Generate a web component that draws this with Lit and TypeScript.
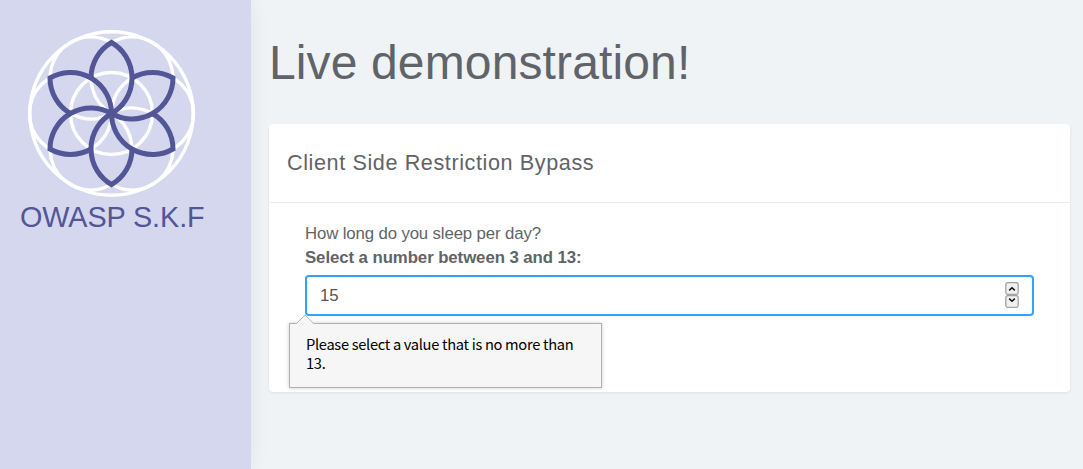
import { LitElement, html, css, svg } from "lit";
import { customElement, property } from "lit/decorators.js";

const R = 41;
const H = (R * Math.sqrt(3)) / 2;
const ANGLES = [0, 60, 120, 180, 240, 300];

@customElement("skf-logo")
class SkfLogo extends LitElement {
  static styles = css`
    :host { display: block; width: 168px; height: 168px; }
    svg { display: block; }
    .ring { fill: none; stroke: #fff; stroke-width: 3.4; }
    .petal { fill: none; stroke: #525596; stroke-width: 5; }
  `;
  render() {
    return html`<svg width="168" height="168" viewBox="-83.5 -84.5 168 168" aria-hidden="true">
      <circle class="ring" r="81.7"></circle>
      <circle class="ring" r=${R}></circle>
      ${ANGLES.map((a) => svg`<circle class="ring" cx=${R} r=${R} transform="rotate(${a})"></circle>`)}
      ${ANGLES.map(
        (a) => svg`<path class="petal" transform="rotate(${a})"
          d="M${-R / 2} ${-H}A${R} ${R} 0 0 1 0 ${-2 * H}A${R} ${R} 0 0 1 0 0"></path>`
      )}
    </svg>`;
  }
}

@customElement("number-field")
class NumberField extends LitElement {
  @property() value = "";
  @property() message = "";
  static styles = css`
    :host { display: block; position: relative; letter-spacing: 0; }
    .field {
      box-sizing: border-box; height: 41px; border: 2px solid #33a2f9; border-radius: 4px;
      background: #fff; color: #555; padding: 0 13px;
      display: flex; align-items: center; justify-content: space-between;
      font-size: 16.8px;
    }
    .spin { display: flex; flex-direction: column; margin-top: -2px; }
    .spin svg { display: block; }
    .tip {
      position: absolute; left: -16px; top: 48px; box-sizing: border-box;
      width: 313px; height: 65px; padding: 10px 16px; border: 1px solid #b0b0b0;
      background: #f6f6f6; color: #000; box-shadow: 0 0 4px rgba(0, 0, 0, 0.2);
      font: 14.67px/19px "Noto Sans CJK SC", sans-serif; letter-spacing: -0.31px;
    }
    .arrow { position: absolute; left: 5px; top: -10px; display: block; }
  `;
  render() {
    return html`
      <div class="field">
        <span>${this.value}</span>
        <span class="spin">
          ${[0, 1].map(
            (i) => html`<svg width="14" height="13" viewBox="0 0 14 13">
              <rect x="0.8" y="0.6" width="12.4" height="11.8" rx="2.2" fill="#f0f0f0" stroke="#a3a3a3" stroke-width="1.3"></rect>
              <path d=${i ? "M4.2 3.6L7 6.2L9.8 3.6" : "M4.2 8.4L7 5.8L9.8 8.4"} fill="none" stroke="#111" stroke-width="1.5"></path>
            </svg>`
          )}
        </span>
      </div>
      <div class="tip" role="alert">
        <svg class="arrow" width="20" height="11" viewBox="0 0 20 11">
          <path d="M0.5 11V10H1.5L10 0.7L18.5 10V11Z" fill="#f6f6f6"></path>
          <path d="M0 9.5H1.5L10 0.9L18.5 9.5H20" fill="none" stroke="#b8b8b8"></path>
        </svg>
        ${this.message}
      </div>
    `;
  }
}

@customElement("app-root")
class AppRoot extends LitElement {
  static styles = css`
    :host {
      display: flex; height: 469px; overflow: hidden; background: #eff3f6;
      font-family: "Liberation Sans", Arial, sans-serif; color: #5f6468;
    }
    .side {
      box-sizing: border-box; flex: none; width: 251px; padding: 29px 0 0 20px;
      background: #d5d7ee; color: #525596; box-shadow: 0 0 20px rgba(0, 0, 0, 0.06);
    }
    skf-logo { margin-left: 8px; }
    .brand { font-size: 28.8px; line-height: 34px; margin-top: 3px; letter-spacing: -0.1px; white-space: nowrap; }
    main { flex: 1; padding: 0 13px 0 18px; }
    h1 { margin: 35px 0 0; font-size: 48px; line-height: 56px; font-weight: 400; letter-spacing: 0.13px; color: #606468; }
    .card {
      box-sizing: border-box; height: 268px; margin-top: 33px; background: #fff;
      border-radius: 4px; box-shadow: 0 1px 3px rgba(0, 0, 0, 0.08);
    }
    h2 {
      box-sizing: border-box; height: 79px; margin: 0; padding: 0 18px; border-bottom: 1px solid #e9ebed;
      font-size: 21.6px; line-height: 78px; font-weight: 400; letter-spacing: 0.6px;
    }
    .body { padding: 19px 36px 0; font-size: 16.8px; line-height: 24px; }
    .body p { margin: 0; letter-spacing: -0.13px; }
    .body .hint { font-weight: 700; letter-spacing: -0.07px; }
    number-field { margin-top: 5px; }
  `;
  render() {
    return html`
      <aside class="side">
        <skf-logo></skf-logo>
        <div class="brand">OWASP S.K.F</div>
      </aside>
      <main>
        <h1>Live demonstration!</h1>
        <section class="card">
          <h2>Client Side Restriction Bypass</h2>
          <div class="body">
            <p>How long do you sleep per day?</p>
            <p class="hint">Select a number between 3 and 13:</p>
            <number-field value="15" message="Please select a value that is no more than 13."></number-field>
          </div>
        </section>
      </main>
    `;
  }
}
